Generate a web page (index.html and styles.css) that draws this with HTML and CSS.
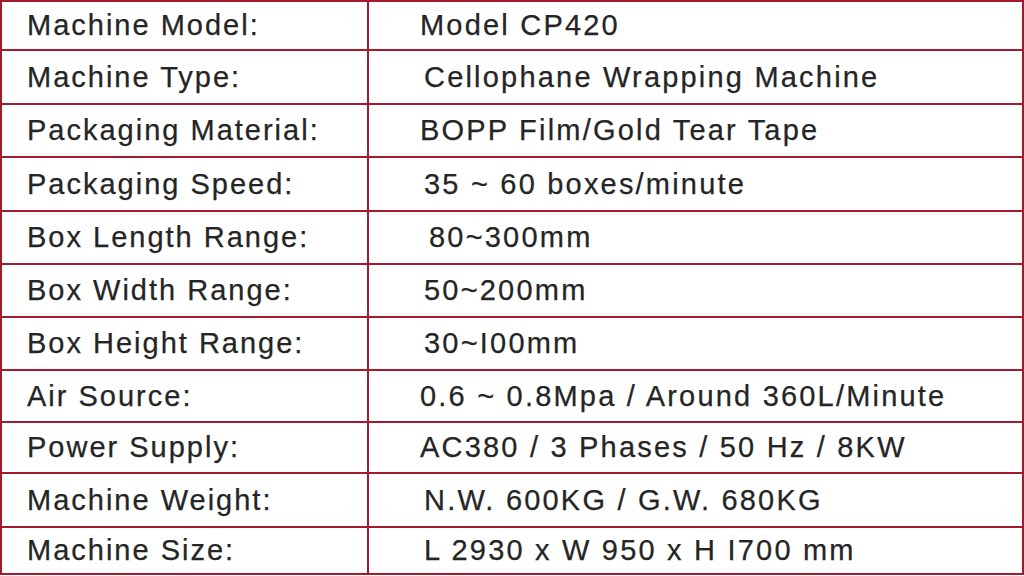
FILE: index.html
```html
<!DOCTYPE html>
<html lang="en">
<head>
<meta charset="utf-8">
<title>Machine Specifications</title>
<link rel="stylesheet" href="styles.css">
</head>
<body>
<div class="spec">
  <div class="cell label">Machine Model:</div>
  <div class="cell value">Model CP420</div>
  <div class="cell label">Machine Type:</div>
  <div class="cell value shift">Cellophane Wrapping Machine</div>
  <div class="cell label">Packaging Material:</div>
  <div class="cell value">BOPP Film/Gold Tear Tape</div>
  <div class="cell label">Packaging Speed:</div>
  <div class="cell value shift">35 ~ 60 boxes/minute</div>
  <div class="cell label">Box Length Range:</div>
  <div class="cell value shift2">80~300mm</div>
  <div class="cell label">Box Width Range:</div>
  <div class="cell value shift">50~200mm</div>
  <div class="cell label">Box Height Range:</div>
  <div class="cell value shift">30~I00mm</div>
  <div class="cell label">Air Source:</div>
  <div class="cell value">0.6 ~ 0.8Mpa / Around 360L/Minute</div>
  <div class="cell label">Power Supply:</div>
  <div class="cell value">AC380 / 3 Phases / 50 Hz / 8KW</div>
  <div class="cell label">Machine Weight:</div>
  <div class="cell value shift">N.W. 600KG / G.W. 680KG</div>
  <div class="cell label">Machine Size:</div>
  <div class="cell value shift">L 2930 x W 950 x H I700 mm</div>
</div>
</body>
</html>
```
FILE: styles.css
```css
html, body {
  margin: 0;
  padding: 0;
  background: #ffffff;
}

.spec {
  width: 1024px;
  box-sizing: border-box;
  padding: 2px;
  background: #a31a2e;
  display: grid;
  grid-template-columns: 365px 1fr;
  grid-template-rows: 47px 52px 51px 52px 51px 51px 51px 50px 49px 52px 45px;
  gap: 2px;
  font-family: "Liberation Sans", Arial, sans-serif;
  font-size: 29px;
  letter-spacing: 2px;
  color: #252525;
  -webkit-text-stroke: 0.25px #252525;
}

.cell {
  background: #ffffff;
  display: flex;
  align-items: center;
  white-space: nowrap;
}

.label {
  padding-left: 25px;
}

.value {
  padding-left: 51px;
  letter-spacing: 2.2px;
}

.value.shift {
  padding-left: 55px;
}

.value.shift2 {
  padding-left: 60px;
}
```
